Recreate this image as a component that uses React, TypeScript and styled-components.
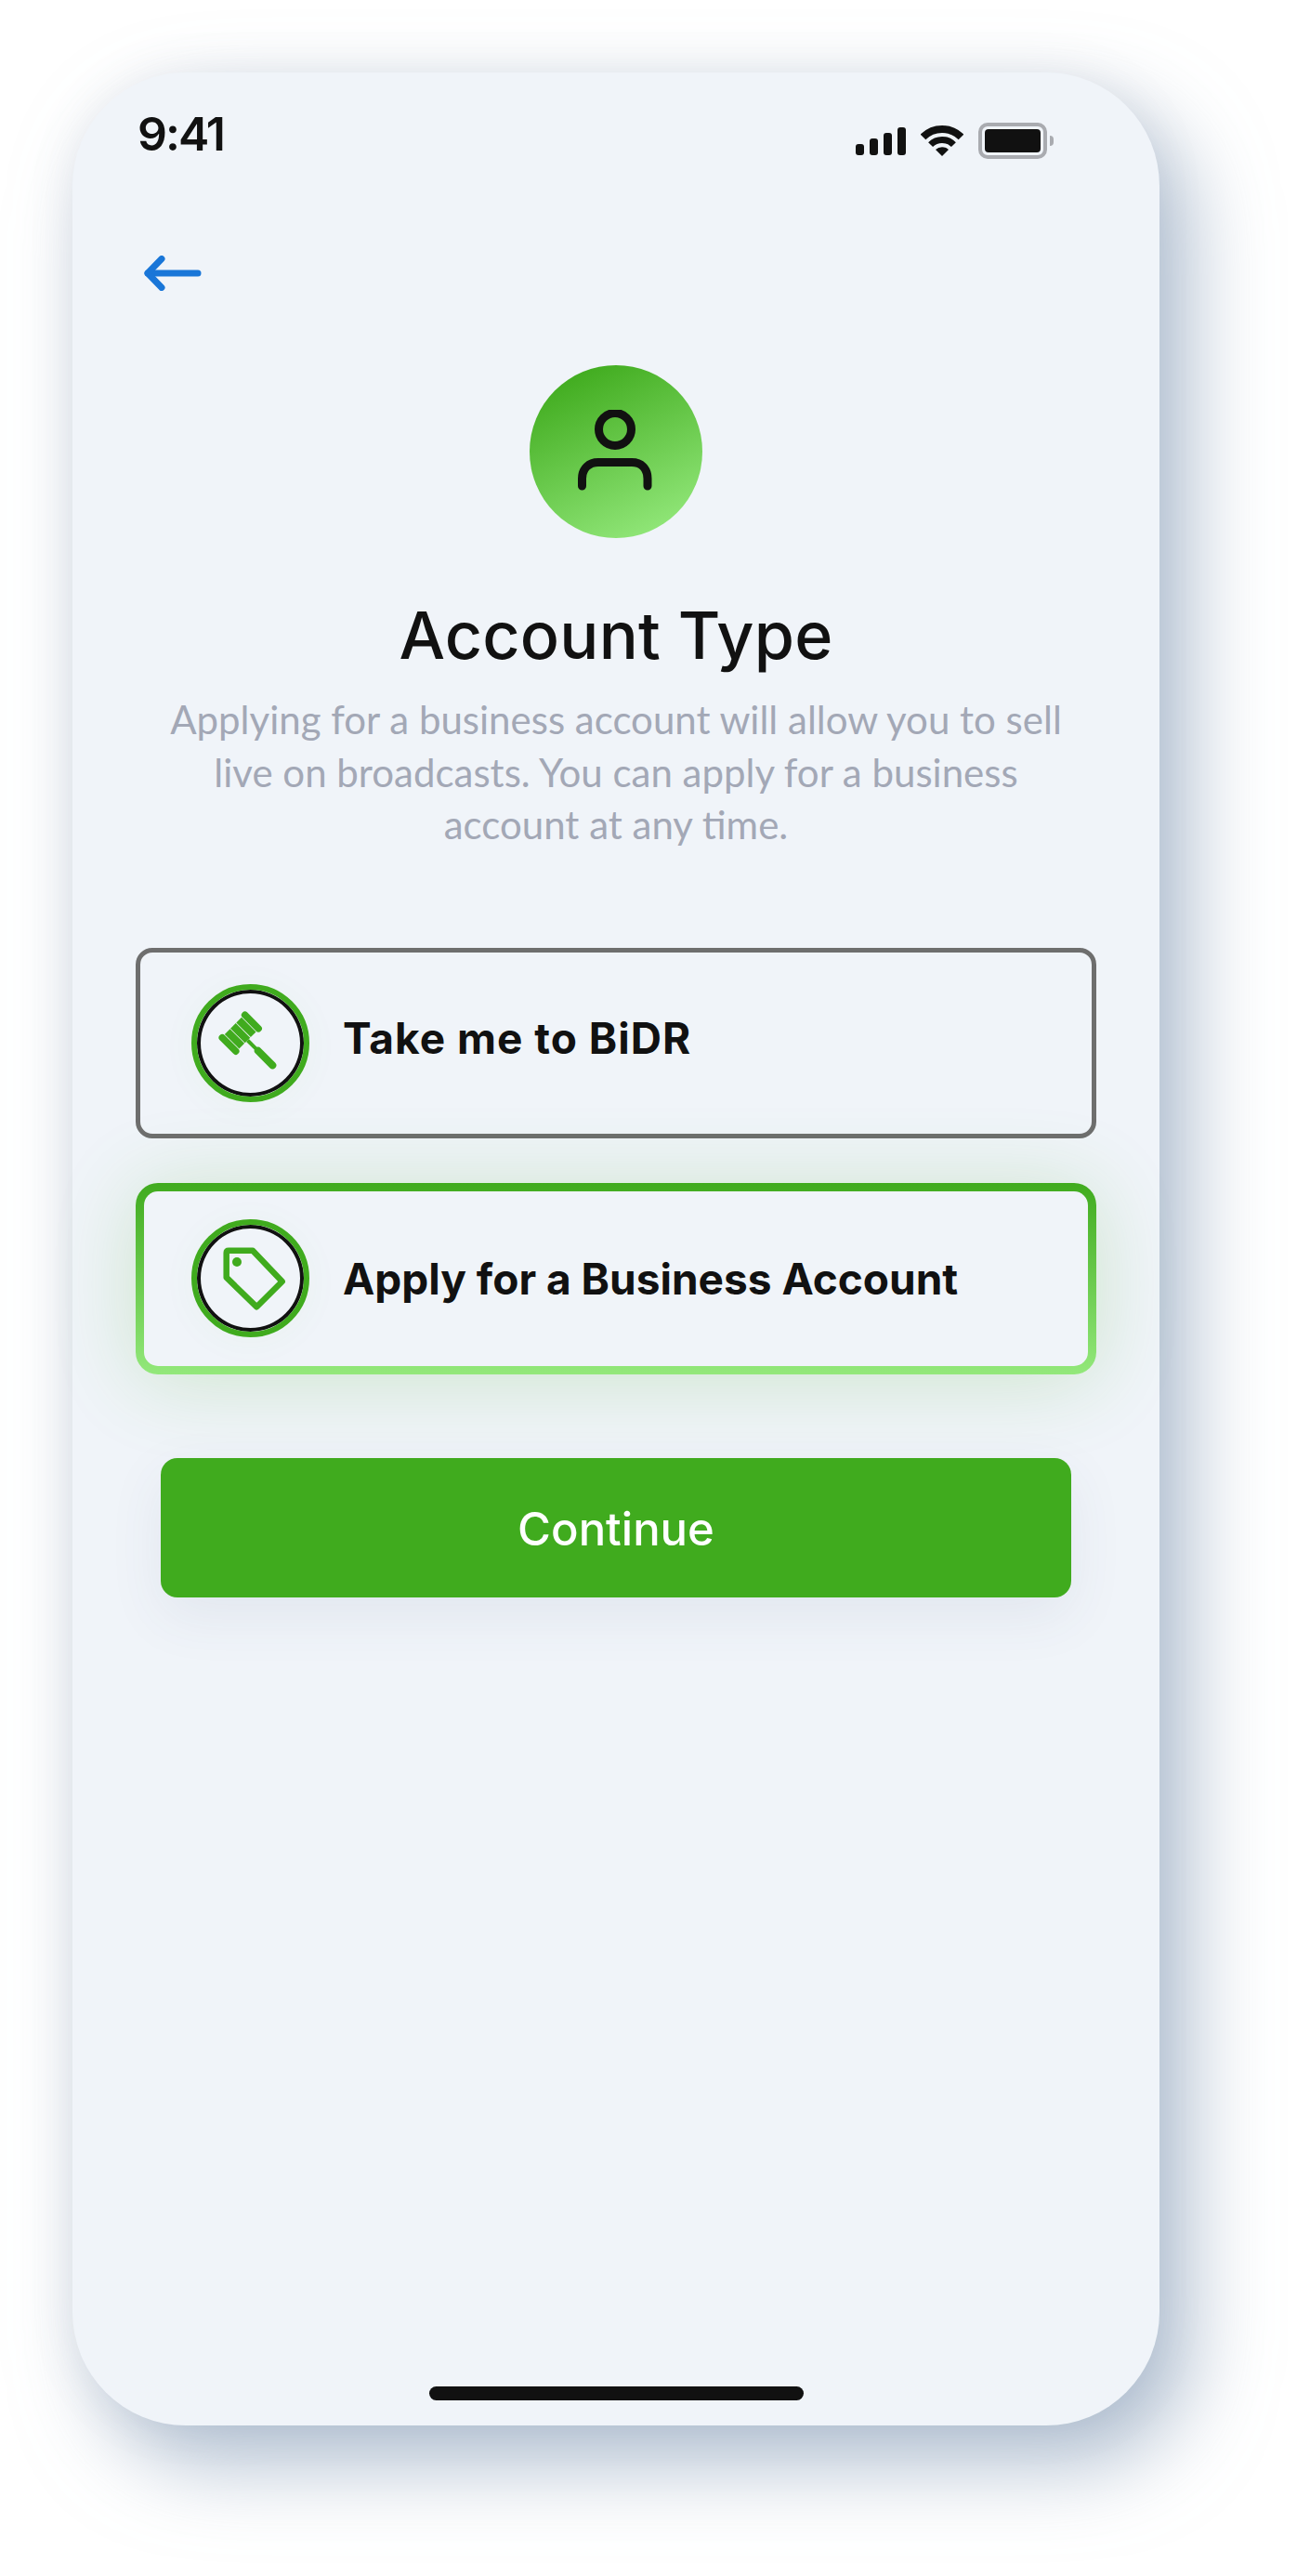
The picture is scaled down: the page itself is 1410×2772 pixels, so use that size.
import React from 'react';
import styled, { createGlobalStyle } from 'styled-components';

const GlobalStyle = createGlobalStyle`
  html, body {
    margin: 0;
    padding: 0;
    background: #fff;
  }
  * {
    box-sizing: border-box;
  }
`;

const GREEN = '#40ab1e';
const LIGHT_GREEN = '#93e87b';
const INK = '#111111';
const SURFACE = '#f0f4f9';

const App: React.FC = () => {
  return (
    <>
      <GlobalStyle />
      <Page>
        <Phone>
          <StatusBar>
            <Time>9:41</Time>
            <StatusIcons>
              <SignalBars>
                <Bar height={12} />
                <Bar height={18} />
                <Bar height={24} />
                <Bar height={30} />
              </SignalBars>
              <svg width="46" height="33" viewBox="0 0 46 33">
                <g fill="none" stroke={INK}>
                  <path d="M2.5 12.5 A29 29 0 0 1 43.5 12.5" strokeWidth="8" />
                  <path d="M10.6 20.6 A17.5 17.5 0 0 1 35.4 20.6" strokeWidth="7" />
                </g>
                <path d="M23 33 L16 26 A10 10 0 0 1 30 26 Z" fill={INK} />
              </svg>
              <Battery>
                <BatteryFill />
                <BatteryNub />
              </Battery>
            </StatusIcons>
          </StatusBar>

          <BackButton aria-label="Back">
            <svg width="62" height="38" viewBox="0 0 62 38" fill="none" stroke="#1976d8" strokeWidth="7" strokeLinecap="round" strokeLinejoin="round">
              <path d="M4 19 H58" />
              <path d="M19 3.5 L4 19 L19 34.5" />
            </svg>
          </BackButton>

          <Avatar>
            <svg width="90" height="90" viewBox="0 0 90 90" fill="none" stroke={INK} strokeWidth="9" strokeLinecap="round">
              <circle cx="44" cy="21" r="17.5" />
              <path d="M8.5 82 V74 C8.5 63 16 56.5 26 56.5 H62 C72 56.5 79 63 79 74 V82" />
            </svg>
          </Avatar>

          <Title>Account Type</Title>
          <Description>
            Applying for a business account will allow you to sell
            <br />
            live on broadcasts. You can apply for a business
            <br />
            account at any time.
          </Description>

          <Options>
            <OptionCard>
              <IconRing>
                <svg width="111" height="111" viewBox="8 8 111 111">
                  <g transform="translate(52.7 52.7) rotate(45)" fill={GREEN}>
                    <rect x="-14" y="-21" width="28" height="7.5" rx="3.7" />
                    <rect x="-11" y="-12.8" width="22" height="8" />
                    <rect x="-11" y="-4" width="22" height="8" />
                    <rect x="-11" y="4.8" width="22" height="8" />
                    <rect x="-14" y="13.5" width="28" height="7.5" rx="3.7" />
                    <rect x="11" y="-2" width="14" height="4" />
                    <rect x="23" y="-4" width="30" height="8" rx="4" />
                  </g>
                </svg>
              </IconRing>
              <OptionLabel $lift={10} $tracking={1}>Take me to BiDR</OptionLabel>
            </OptionCard>

            <OptionCard $selected>
              <IconRing>
                <svg width="111" height="111" viewBox="8 8 111 111">
                  <path
                    d="M37.7 36.2 Q37.7 33.7 40.2 33.7 H66 L97.7 67 L70.3 94.3 L37.7 62.7 Z"
                    fill="none"
                    stroke={GREEN}
                    strokeWidth="6.5"
                    strokeLinejoin="round"
                  />
                  <circle cx="49" cy="46" r="5" fill={GREEN} />
                </svg>
              </IconRing>
              <OptionLabel>Apply for a Business Account</OptionLabel>
            </OptionCard>
          </Options>

          <ContinueButton>Continue</ContinueButton>

          <HomeBar />
        </Phone>
      </Page>
    </>
  );
};

export default App;

const Page = styled.div`
  width: 1410px;
  height: 2772px;
  padding: 78px 162px 162px 78px;
  overflow: hidden;
  background: #fff;
`;

const Phone = styled.div`
  width: 1170px;
  height: 2532px;
  display: flex;
  flex-direction: column;
  background: ${SURFACE};
  border-radius: 122px;
  box-shadow: 30px 40px 90px rgba(120, 145, 175, 0.6), 0 0 50px rgba(120, 130, 145, 0.1);
`;

const StatusBar = styled.div`
  height: 144px;
  flex-shrink: 0;
  display: flex;
  align-items: center;
  justify-content: space-between;
  padding: 0 114px 0 70px;
`;

const Time = styled.span`
  margin-bottom: 12px;
  font-family: Inter, 'Liberation Sans', sans-serif;
  font-size: 50px;
  font-weight: 600;
  letter-spacing: -2px;
  line-height: 60px;
  color: ${INK};
`;

const StatusIcons = styled.div`
  display: flex;
  align-items: center;
  gap: 16px;
  margin-top: 3px;
`;

const SignalBars = styled.div`
  display: flex;
  align-items: flex-end;
  gap: 6px;
  height: 30px;
`;

const Bar = styled.span<{ height: number }>`
  width: 9px;
  height: ${props => props.height}px;
  border-radius: 3px;
  background: ${INK};
`;

const Battery = styled.div`
  position: relative;
  width: 74px;
  height: 39px;
  padding: 3px;
  margin-right: 7px;
  border: 4px solid #a9abb0;
  border-radius: 10px;
`;

const BatteryFill = styled.div`
  width: 100%;
  height: 100%;
  border-radius: 4px;
  background: ${INK};
`;

const BatteryNub = styled.span`
  position: absolute;
  top: 10px;
  right: -11px;
  width: 4px;
  height: 11px;
  border-radius: 0 5px 5px 0;
  background: #a9abb0;
`;

const BackButton = styled.button`
  align-self: flex-start;
  display: block;
  margin: 53px 0 0 77px;
  padding: 0;
  height: 38px;
  border: none;
  background: none;
  cursor: pointer;
`;

const Avatar = styled.div`
  align-self: center;
  width: 186px;
  height: 186px;
  margin-top: 80px;
  display: flex;
  align-items: center;
  justify-content: center;
  border-radius: 50%;
  background: linear-gradient(155deg, ${GREEN} 10%, ${LIGHT_GREEN} 92%);
`;

const Title = styled.h1`
  margin: 63px 0 0;
  font-family: Inter, 'Liberation Sans', sans-serif;
  font-size: 70px;
  font-weight: 500;
  letter-spacing: 0.2px;
  line-height: 84px;
  text-align: center;
  color: ${INK};
`;

const Description = styled.p`
  margin: 20px 0 0;
  font-family: Lato, 'Liberation Sans', sans-serif;
  font-size: 42px;
  font-weight: 400;
  line-height: 56.5px;
  text-align: center;
  color: #a3a8b6;
`;

const Options = styled.div`
  display: flex;
  flex-direction: column;
  gap: 48px;
  margin: 104px 68px 0;
`;

const OptionCard = styled.div<{ $selected?: boolean }>`
  display: flex;
  align-items: center;
  gap: 36px;
  height: ${props => (props.$selected ? 206 : 205)}px;
  padding-left: ${props => (props.$selected ? 51 : 55)}px;
  border-style: solid;
  border-color: ${props => (props.$selected ? 'transparent' : '#6e6e6e')};
  border-width: ${props => (props.$selected ? 9 : 5)}px;
  border-radius: ${props => (props.$selected ? 24 : 18)}px;
  background: ${props =>
    props.$selected
      ? `linear-gradient(${SURFACE}, ${SURFACE}) padding-box, linear-gradient(180deg, ${GREEN}, ${LIGHT_GREEN}) border-box`
      : SURFACE};
  box-shadow: ${props => (props.$selected ? '0 6px 90px rgba(64, 171, 30, 0.2)' : 'none')};
`;

const IconRing = styled.div`
  width: 127px;
  height: 127px;
  flex-shrink: 0;
  display: flex;
  align-items: center;
  justify-content: center;
  border: 6px solid ${GREEN};
  border-radius: 50%;
  box-shadow: inset 0 0 0 4px ${INK}, 0 4px 40px rgba(64, 171, 30, 0.04);
`;

const OptionLabel = styled.span<{ $lift?: number; $tracking?: number }>`
  margin-bottom: ${props => props.$lift ?? 0}px;
  font-family: Inter, 'Liberation Sans', sans-serif;
  font-size: 46px;
  font-weight: 700;
  letter-spacing: ${props => props.$tracking ?? 0}px;
  color: ${INK};
`;

const ContinueButton = styled.button`
  flex-shrink: 0;
  height: 150px;
  margin: 90px 95px 0;
  padding: 3px 0 0;
  border: none;
  border-radius: 18px;
  background: ${GREEN};
  box-shadow: 0 20px 60px rgba(60, 80, 110, 0.08);
  font-family: Inter, 'Liberation Sans', sans-serif;
  font-size: 49px;
  font-weight: 500;
  color: #fff;
  cursor: pointer;
`;

const HomeBar = styled.div`
  align-self: center;
  width: 403px;
  height: 15px;
  margin-top: auto;
  margin-bottom: 27px;
  border-radius: 8px;
  background: ${INK};
`;
